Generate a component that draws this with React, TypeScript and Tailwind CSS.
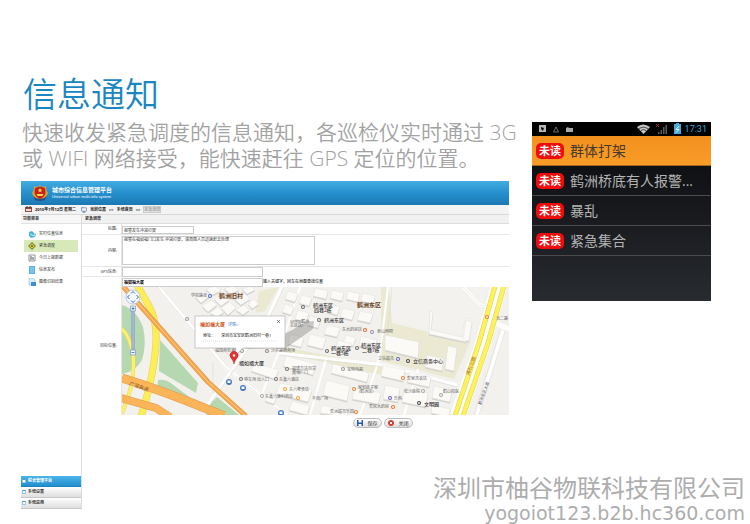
import { Monitor } from 'lucide-react'
import type { ReactNode } from 'react'

type MapLabel = {
  text: string
  x: number
  y: number
  kind?: 'area' | 'place' | 'shop'
}

const labels: MapLabel[] = [
  { text: '鹤洲旧村', x: 97, y: 11, kind: 'area' },
  { text: '学校路南', x: 69, y: 10 },
  { text: '福如福大厦', x: 117, y: 78, kind: 'place' },
  { text: '福围商务酒店', x: 93, y: 65 },
  { text: '沙井路晒商场', x: 149, y: 65 },
  { text: 'GPRS(鹤洲', x: 168, y: 36 },
  { text: '东区店)', x: 168, y: 40 },
  { text: '福建万达百货', x: 170, y: 83 },
  { text: '黄海厂门', x: 170, y: 87 },
  { text: '停车场 出入口', x: 122, y: 94 },
  { text: '东鑫六酒店', x: 157, y: 94 },
  { text: '东六零食店', x: 167, y: 104 },
  { text: '东鑫六便利商店', x: 143, y: 111 },
  { text: '鹤洲东区', x: 191, y: 20, kind: 'place' },
  { text: '四巷2栋', x: 192, y: 25, kind: 'place' },
  { text: '鹤洲东区', x: 202, y: 35, kind: 'place' },
  { text: '鹤洲东区', x: 235, y: 20, kind: 'area' },
  { text: '东大药房店', x: 220, y: 44 },
  { text: '泰山网吧', x: 255, y: 46 },
  { text: '鹤洲东区', x: 209, y: 63, kind: 'place' },
  { text: '一巷5栋', x: 209, y: 68, kind: 'place' },
  { text: '鹤洲东区', x: 239, y: 60, kind: 'place' },
  { text: '二巷7栋', x: 240, y: 65, kind: 'place' },
  { text: '立信超市', x: 256, y: 73 },
  { text: '立信商务中心', x: 291, y: 76, kind: 'place' },
  { text: '宝明电器', x: 225, y: 84 },
  { text: '爱家洗衣店', x: 285, y: 93 },
  { text: '家和妹子家', x: 236, y: 102 },
  { text: '(鹤洲店)', x: 237, y: 106 },
  { text: '松沙医院', x: 282, y: 106 },
  { text: '鹤山校医', x: 321, y: 106 },
  { text: '乐购', x: 272, y: 113 },
  { text: '丰南广场', x: 190, y: 113 },
  { text: '文明园', x: 302, y: 119, kind: 'place' },
  { text: '爱民大药房', x: 247, y: 121 },
  { text: '爱洲超市乐园', x: 208, y: 126 },
  { text: '北二路', x: 374, y: 33 },
]

const labelStyle = {
  area: 'fill-[#6b4423] text-[6px] font-bold',
  place: 'fill-[#333] text-[5px] font-medium',
  shop: 'fill-[#666] text-[4px]',
}

// [x, y, colour] of the small shop dots
const pins: [number, number, string][] = [
  [88, 9, '#5a6fc0'], [65, 32, '#9a9a9a'], [120, 64, '#9a9a9a'], [145, 64, '#8a8a8a'],
  [181, 20, '#6b6b6b'], [197, 33, '#6b6b6b'], [243, 43, '#e8642c'], [250, 45, '#8c8cc0'],
  [205, 64, '#6b6b6b'], [235, 61, '#6b6b6b'], [276, 72, '#6a62c8'], [286, 74, '#444'],
  [221, 82, '#9a9a9a'], [281, 91, '#e8843c'], [232, 102, '#e8843c'], [268, 111, '#6a62c8'],
  [271, 120, '#e8742c'], [234, 125, '#e8842c'], [163, 102, '#eea53c'], [176, 111, '#eea53c'],
  [140, 109, '#aaa'], [301, 104, '#aaa'], [319, 108, '#aaa'], [297, 116, '#444'],
  [365, 30, '#e8842c'], [165, 82, '#777'], [119, 92, '#777'], [154, 92, '#777'],
]

const buildings = [
  'M73 10l9-6 6 5-9 7z', 'M84 2l9-3 6 5-9 4z', 'M80 19l9-6 6 5-9 7z', 'M92 12l9-5 6 6-8 6z',
  'M88 26l8-6 6 5-7 5z', 'M99 21l9-6 6 6-8 7z', 'M112 12l10-6 6 6-9 6z', 'M114 23l8-5 5 5-6 5z',
  'M102 2l9-3 6 4-8 4z', 'M120 2l9-3 4 4-8 4z', 'M126 17l6-5 5 5-7 5z',
  'M166 4l10 3-3 8-10-3z', 'M180 8l10 3-3 8-10-3z', 'M194 1l12 3-2 8-13-3z', 'M210 3l12 3-2 8-12-3z',
  'M226 4l12 3-2 8-12-3z', 'M241 6l12 3-2 8-12-3z', 'M163 17l9 3-3 8-9-3z', 'M176 23l11 3-3 9-11-3z',
  'M208 17l10 3-3 8-10-3z', 'M221 21l12 3-3 9-12-3z', 'M238 24l13 3-3 9-13-3z', 'M188 29l11 3-3 9-11-3z',
  'M205 38l13 3-3 9-13-3z', 'M224 48l10 3-3 8-10-3z', 'M188 47l16 4-3 11-16-4z', 'M168 47l14 4-3 9-13-3z',
  'M216 53l14 4-3 7-13-3z', 'M239 49l16 4-3 10-15-4z',
  'M263 48l34 7-1 16-33-8z', 'M308 24l3 1-2 18 31 7 3-19 4 1-3 23-37-8z', 'M344 33l6 2-3 19-6-1z',
  'M326 59l9 2-3 23-9-2z', 'M305 68l17 4-2 12-17-4z', 'M211 77l36 9-2 9-36-9z', 'M261 78l22 5-2 11-22-5z',
  'M287 85l22 5-2 10-22-5z', 'M312 99l18 4-2 12-18-4z', 'M204 93l24 6-3 15-24-6z', 'M233 101l26 5-3 11-26-5z',
  'M263 98l15 3-2 14-15-3z', 'M282 101l24 5-2 14-24-5z', 'M200 118l26 6-1 6-27-4z', 'M310 118l18 4-1 8-18-4z',
  'M133 76l24 7-4 9-24-8z', 'M164 69l30 8-3 11-30-9z', 'M158 96l32 7-4 12-32-8z', 'M146 105l9 3-3 9-9-3z',
  'M170 114l18 5-3 9-18-5z',
]

function DistrictMap() {
  return (
    <svg
      viewBox="0 0 387 128"
      preserveAspectRatio="xMidYMid slice"
      className="block w-full bg-[#f3f1ed]"
      role="img"
      aria-label="地图"
    >
      <g fill="#b5d8b0">
        <path d="M0 18q14 4 21 22 4 18-1 33-7 12-20 14z" />
        <path d="M38 53l38 43-2 10-37-22z" />
        <path d="M36 93q8-1 14 4l24 18-16-2-23-10z" />
        <path d="M95 110l22 18H84l5-12z" />
      </g>
      <g fill="#ebe9d2">
        <path d="M259 0h8l3 36 78 19-16 37-72-18-1-20z" />
        <path d="M137 4l20-4-14 24-10 2z" />
        <path d="M163 60l100 20-4 8-99-22z" />
      </g>
      <path d="M268 0h97l-12 50-82-16z" fill="#f3f2ee" />
      <g fill="none" stroke="#fff">
        <path d="M37 0l36 43 30 36 62 49" strokeWidth="4" />
        <path d="M160 0l-16 34-34 49-28 40" strokeWidth="3" />
        <path d="M157 66l104 12 74 20" strokeWidth="3" />
        <path d="M178 0l-20 62-20 50" strokeWidth="2" />
        <path d="M266 0l-6 50-4 26-18 52" strokeWidth="2" />
        <path d="M204 72l-16 56M296 82l-14 46" strokeWidth="2" />
        <path d="M341 0l17 18 12 2" strokeWidth="3" />
        <path d="M366 33l21 9" strokeWidth="5" />
        <path d="M381 44l-26 84" strokeWidth="4" />
      </g>
      <g fill="none" stroke="#d6d5d2" strokeWidth="0.5">
        <path d="M35 0l36 43 30 36 62 49M39 0l36 43 30 36 62 49" />
        <path d="M162 0l-16 34-34 49-28 40M341 0l17 18 12 2M383 44l-26 84M378 44l-26 84" />
        <path d="M270 0l-5 49M91 75l0 32M157 68l104 12 74 20" />
      </g>
      <g fill="#d3d2cf" transform="translate(0 1.5)">
        {buildings.map((d) => (
          <path key={d} d={d} />
        ))}
      </g>
      <g fill="#fbfaf7" stroke="#dedcd8" strokeWidth="0.4">
        {buildings.map((d) => (
          <path key={d} d={d} />
        ))}
      </g>

      <g fill="none" strokeLinejoin="round">
        <path d="M-1 41q9 8 12 26 3 30-12 61" stroke="#e9d85c" strokeWidth="4" />
        <path d="M-1 41q9 8 12 26 3 30-12 61" stroke="#fdf06a" strokeWidth="3" />
        <path d="M15-2l12 21q8 14 7 35-1 30-15 76" stroke="#e6d04e" strokeWidth="7" />
        <path d="M15-2l12 21q8 14 7 35-1 30-15 76" stroke="#fdee58" strokeWidth="6" />
        <path d="M0 91q40 12 102 38" stroke="#dd9a50" strokeWidth="9" />
        <path d="M0 91q40 12 102 38" stroke="#fbb458" strokeWidth="8" />
        <path d="M-1 111l35 10 14 9" stroke="#dd9a50" strokeWidth="8" />
        <path d="M-1 111l35 10 14 9" stroke="#fbb458" strokeWidth="7" />
        <path d="M-1-3l87 98 38 34" stroke="#dc944a" strokeWidth="5" />
        <path d="M-1-3l87 98 38 34" stroke="#f8a94e" strokeWidth="4" />
        <path d="M-1-3l87 98 38 34" stroke="#fdc98a" strokeWidth="1" />
        <path d="M377-1l-16 57-25 73" stroke="#fff" strokeWidth="16" />
        <path d="M373-1l-16 57-24 73M382-1l-16 57-25 73" stroke="#ddd05a" strokeWidth="5" />
        <path d="M373-1l-16 57-24 73M382-1l-16 57-25 73" stroke="#fdf25c" strokeWidth="4" />
      </g>

      {pins.map(([x, y, fill]) => (
        <g key={`${x}-${y}`}>
          <circle cx={x} cy={y} r="2" fill={fill} />
          <circle cx={x} cy={y} r="0.9" fill="#fff" />
        </g>
      ))}
      {[[107, 95], [121, 101], [159, 126]].map(([x, y]) => (
        <g key={x}>
          <circle cx={x} cy={y} r="3" fill="#3f78c0" />
          <path d={`M${x - 1.5} ${y - 1.5}h3v2.5h-3z`} fill="#fff" />
        </g>
      ))}
      {labels.map((label) => (
        <text
          key={`${label.x}-${label.y}`}
          x={label.x}
          y={label.y}
          className={labelStyle[label.kind ?? 'shop']}
        >
          {label.text}
        </text>
      ))}
      <text transform="translate(7 98) rotate(19)" className="fill-[#8a5a20] text-[5px]">
        广深高速
      </text>
      <text transform="translate(347 89) rotate(-70)" className="fill-[#a8741c] text-[5px]">
        洲石公路
      </text>
      <text transform="translate(359 118) rotate(-70)" className="fill-[#444] text-[4px]">
        鹤洲东区大道
      </text>

      {/* pan and zoom control */}
      <path d="M11 20v46" stroke="#7d92c6" strokeWidth="3" />
      <path d="M11 23v40" stroke="#c9d6f2" strokeWidth="1" />
      <circle cx="11" cy="10" r="7" fill="#f4f8fe" stroke="#a9bede" strokeWidth="0.8" />
      <path
        d="M9 6.500l2-2 2 2M9 13.500l2 2 2-2M7.500 8l-2 2 2 2M14.500 8l2 2-2 2"
        fill="none"
        stroke="#3a6fc0"
        strokeWidth="1"
      />
      <g fill="#eef3fc" stroke="#7d92c6" strokeWidth="0.7">
        <path d="M8.500 19h5v5h-5zM8.500 63h5v5h-5z" />
      </g>
      <path d="M9.500 21.500h3M11 20v3M9.500 65.500h3" stroke="#4166b0" strokeWidth="0.8" />

      {/* info window */}
      <path d="M122 62l42-1 27-19 1-8q-10 0-20 8l-8 4z" fill="#555" opacity="0.3" />
      <path d="M73 29h90v32h-42l-9 9 2-9H73z" fill="#fff" stroke="#aaa" strokeWidth="0.6" />
      <text x="78" y="39" className="fill-[#cc5522] text-[5px] font-bold">
        福如福大厦
      </text>
      <text x="106" y="39" className="fill-[#3a7ac8] text-[4px]">
        详情»
      </text>
      <path d="M155 33l3 3M158 33l-3 3" stroke="#666" strokeWidth="0.8" />
      <text x="81" y="50" className="fill-[#111] text-[4px]">
        地址：
      </text>
      <text x="99" y="50" className="fill-[#111] text-[4px]">
        深圳市宝安区鹤洲旧村一巷1
      </text>
      <path d="M79 54h75" stroke="#bbb" strokeWidth="0.5" strokeDasharray="1 1" />
      <path d="M112 77q-1-4-3-6a4 4 0 1 1 6 0q-2 2-3 6z" fill="#e3312d" stroke="#a51b18" strokeWidth="0.4" />
      <circle cx="112" cy="68.500" r="1.200" fill="#fff" />
    </svg>
  )
}

function Emblem() {
  return (
    <svg viewBox="0 0 16 16" className="size-4 shrink-0" aria-hidden="true">
      <path d="M8 0l2 2 4-.5.500 4L16 8l-2 4-3 3-3 1-3-1-3-3-2-4 1.500-2.500.5-4L6 2z" fill="#d9a52a" />
      <path d="M3 3l5-1.500L13 3l.5 5q-1 4-5.500 6-4.500-2-5.500-6z" fill="#c5221f" />
      <path d="M8 3l.7 1.500 1.600.2-1.200 1 .3 1.600L8 6.500l-1.400.8.3-1.600-1.200-1 1.600-.2z" fill="#ffd84a" />
      <path d="M4.500 9h7l-1 2h-5z" fill="#ffd84a" />
      <path d="M1 11q3 3 7 3t7-3l-2 4q-2 1-5 1t-5-1z" fill="#24518e" />
    </svg>
  )
}

const menu: { text: string; icon: ReactNode }[] = [
  {
    text: '实时位置信息',
    icon: (
      <>
        <path d="M1 2l3-1 2 2 2 1-1 3-4 1-2-2z" fill="#4cb4d8" />
        <path d="M2 4l4 2 1-3" fill="none" stroke="#d8f2fa" strokeWidth="0.8" />
      </>
    ),
  },
  {
    text: '紧急调度',
    icon: (
      <>
        <path d="M4 0l4 4-4 4-4-4z" fill="#7c8427" />
        <path d="M4 1.500L6.500 4 4 6.500 1.500 4z" fill="#f0d34e" />
        <circle cx="4" cy="4" r="1" fill="#5c5f20" />
      </>
    ),
  },
  {
    text: '今日上报数据',
    icon: (
      <>
        <path d="M1 1h6v6H1z" fill="#fff" stroke="#777" strokeWidth="0.8" />
        <path d="M3 2v4M5 3v3" stroke="#444" strokeWidth="0.9" />
      </>
    ),
  },
  {
    text: '信息发布',
    icon: (
      <>
        <path d="M1 0h6v8H1z" fill="#57b5e4" />
        <path d="M2 2h4M2 4h4M2 6h4" stroke="#c6e8f8" strokeWidth="0.6" />
      </>
    ),
  },
  {
    text: '图像识别结果',
    icon: (
      <>
        <path d="M1 0h4l2 2v5H1z" fill="#dcecf8" stroke="#8db4d4" strokeWidth="0.6" />
        <path d="M3 4h5v4H3z" fill="#3f8fd0" />
      </>
    ),
  },
]

function AdminPanel() {
  return (
    <section className="mr-[9px] flex flex-col bg-white text-[4px] leading-[6px] text-[#333]">
      <header className="flex h-6 items-center gap-1 bg-linear-to-b from-[#42ace2] via-[#2590ce] to-[#1b78b4] pl-[11px] text-white">
        <Emblem />
        <div>
          <h2 className="text-[6px] leading-[7px] font-bold">城市综合信息管理平台</h2>
          <p className="font-['Liberation_Sans'] leading-[5px]">
            Universal urban multi-info system
          </p>
        </div>
      </header>

      <nav className="flex h-2.5 items-center gap-[3px] border-b border-[#d8d8d8] bg-[#f3f3f3] pl-1 font-bold text-[#222]">
        <svg viewBox="0 0 7 7" className="size-[7px]" aria-hidden="true">
          <path d="M0 1h7v5H0z" fill="#8a4b40" />
          <path d="M1 3h5v2H1z" fill="#f3d9d0" />
          <path d="M2 0v2M5 0v2" stroke="#333" />
        </svg>
        <span>2010年7月12日 星期二</span>
        <Monitor className="ml-0.5 size-1.5 text-[#28569a]" />
        <span>当前位置</span>
        <span>&gt;&gt;</span>
        <span>系统首页</span>
        <span>&gt;&gt;</span>
        <a href="#dispatch" className="border border-[#ccc] bg-[#e4e4e4] leading-[5px] text-[#aaa]">
          紧急调度
        </a>
      </nav>

      <div className="flex min-h-[294px]">
        <aside className="flex w-[61px] shrink-0 flex-col border-r border-[#ddd]">
          <h3 className="h-[9px] border-b border-[#e2e2e2] bg-[#f7f7f7] pl-0.5 leading-2 font-bold">功能菜单</h3>
          <ul className="mx-[3px] mt-1 flex-1">
            {menu.map((item) => (
              <li key={item.text}>
                <a
                  href="#menu"
                  className={`flex h-3 items-center gap-[3px] pl-1 ${item.text === '紧急调度' ? 'bg-[#d7e9b9]' : ''}`}
                >
                  <svg viewBox="0 0 8 8" className="size-2" aria-hidden="true">
                    {item.icon}
                  </svg>
                  {item.text}
                </a>
              </li>
            ))}
          </ul>
          {['综合管理平台', '系统设置', '系统应用'].map((text, i) => (
            <button
              key={text}
              type="button"
              className={`flex h-[11px] items-center gap-0.5 border-b pl-px text-left font-bold ${
                i === 0
                  ? 'border-[#1b83bd] bg-linear-to-b from-[#49b5e8] to-[#218fcd] text-white'
                  : 'border-[#c8c8c8] bg-linear-to-b from-white to-[#dedede]'
              }`}
            >
              <span className="h-1 w-1 border border-t-[#3d9bd8] border-[#9ec6e0] bg-white" />
              {text}
            </button>
          ))}
        </aside>

        <form id="dispatch" className="min-w-0 flex-1" onSubmit={(e) => e.preventDefault()}>
          <h3 className="h-[9px] border-b border-[#ddd] bg-[#f1f1f1] pl-[3px] leading-2 font-bold">紧急调度</h3>
          <div className="grid grid-cols-[40px_1fr] [&>label]:border-r [&>label]:border-[#e6e6e6] [&>label]:pr-1 [&>label]:text-right">
            <label htmlFor="title" className="border-b pt-0.5">标题:</label>
            <div className="border-b border-[#e6e6e6] pt-0.5">
              <input
                id="title"
                defaultValue="报警发生冲突打架"
                className="block h-2 w-[72px] border border-[#ccc] bg-white px-px"
              />
            </div>
            <label htmlFor="content" className="flex items-center justify-end border-b">内容:</label>
            <div className="border-b border-[#e6e6e6] py-px">
              <textarea
                id="content"
                defaultValue="报警在福如福门口发生 冲突打架，请周围人员迅速赶去处理"
                className="block h-[29px] w-[193px] resize-none overflow-hidden border border-[#ccc] bg-white px-px"
              />
            </div>
            <label htmlFor="gps" className="border-b pt-0.5">GPS信息:</label>
            <input id="gps" className="h-2.5 w-[141px] border border-[#ccc] bg-white px-px" />
            <label htmlFor="target" className="flex items-center justify-end">目标位置:</label>
            <div>
              <div className="flex h-2.5 items-center">
                <input
                  id="target"
                  defaultValue="福如福大厦"
                  className="h-[9px] w-[141px] border border-[#ccc] bg-white px-px font-bold text-black"
                />
                <span className="text-black">输入关键字，回车在地图查找位置</span>
              </div>
              <DistrictMap />
            </div>
          </div>
          <div className="mt-[3px] flex justify-center gap-0.5 pl-[175px] text-[5px]">
            <button
              type="button"
              className="flex h-2.5 w-[29px] items-center justify-center gap-1 rounded-full border border-[#bbb] bg-linear-to-b from-white to-[#ddd]"
            >
              <svg viewBox="0 0 6 6" className="size-1.5" aria-hidden="true">
                <path d="M0 0h6v6H0z" fill="#2857b0" />
                <path d="M1.500 0h3v2.500h-3zM1.500 4h3v2h-3z" fill="#fff" />
              </svg>
              <span>保存</span>
            </button>
            <button
              type="button"
              className="flex h-2.5 w-[29px] items-center justify-center gap-1 rounded-full border border-[#bbb] bg-linear-to-b from-white to-[#ddd]"
            >
              <svg viewBox="0 0 6 6" className="size-1.5" aria-hidden="true">
                <circle cx="3" cy="3" r="3" fill="#d03a2c" />
                <path d="M1.800 1.800l2.400 2.400M4.200 1.800L1.800 4.200" stroke="#fff" />
              </svg>
              <span>关闭</span>
            </button>
          </div>
        </form>
      </div>
    </section>
  )
}

function StatusBar() {
  return (
    <div className="flex h-3.5 items-center bg-black pr-1 pl-[7px]">
      <svg viewBox="0 0 36 8" className="h-2 w-9" aria-hidden="true">
        <path d="M0 0h7v7H0z" fill="#b8b8b8" />
        <path d="M2 2l3 1-1 3-2-2z" fill="#111" />
        <path d="M17 2l2.500 5h-5z" fill="none" stroke="#777" strokeWidth="0.9" />
        <path d="M27 3l2-1 1 1h4v4h-7z" fill="#a8a8a8" />
      </svg>
      <svg viewBox="0 0 48 12" className="ml-auto h-3 w-12" aria-hidden="true">
        <path d="M0 4q6-5 13 0L6.500 11z" fill="#c9c9c9" />
        <path d="M2 5.500q4-3 9 0M4 7.500q2-2 5 0" fill="none" stroke="#333" strokeWidth="0.9" />
        <path d="M21 11V9h1.500v2zM23.500 11V7H25v4zM26 11V4h1.500v7zM28.500 11V2H30v9z" fill="#5c5c5c" />
        <path d="M19 1l3 3M22 1l-3 3" stroke="#b02a22" strokeWidth="1" />
        <path d="M37 1h2V0h3v1h2v10h-7z" fill="#4aa9dc" />
        <path d="M42 3l-3 3.500h3L39 9.500" fill="none" stroke="#e8f7ff" strokeWidth="1" />
      </svg>
      <time className="font-[Roboto] text-[9px] leading-3 text-[#35a5d8]">17:31</time>
    </div>
  )
}

function Phone() {
  const messages = ['群体打架', '鹤洲桥底有人报警...', '暴乱', '紧急集合']

  return (
    <section className="mt-[47px] min-h-[179px] w-[179px] shrink-0 bg-linear-to-b from-[#08090c] to-[#282b30]">
      <StatusBar />
      <ul>
        {messages.map((text, i) => (
          <li
            key={text}
            className={`flex h-[30px] items-center gap-1.5 border-b pl-1 text-[14px] ${
              i === 0
                ? 'border-[#a8641a] bg-linear-to-b from-[#f3911d] to-[#fa9c28] text-[#463a2c]'
                : 'border-[#4a4b4d] text-[#b4b4b4]'
            }`}
          >
            <span className="rounded-[5px] bg-[#f00c0c] px-[3px] text-[11px] leading-4 font-bold text-white">
              未读
            </span>
            {text}
          </li>
        ))}
      </ul>
    </section>
  )
}

export default function App() {
  return (
    <main className="relative min-h-screen bg-white pt-[75px] pr-[39px] pb-[15px] pl-[21px] font-['Open_Sans','Noto_Sans_CJK_SC',sans-serif]">
      <div className="flex items-start gap-[14px]">
        <div className="min-w-0 flex-1">
          <h1 className="pl-0.5 text-[34px] leading-[38px] font-[350] text-[#1b87c0]">信息通知</h1>
          <p className="mt-1.5 mb-2.5 pl-px text-[21px] leading-[26px] font-[350] whitespace-nowrap text-[#a2a2a2]">
            快速收发紧急调度的信息通知，各巡检仪实时通过 3G
            <br />
            或 WIFI 网络接受，能快速赶往 GPS 定位的位置。
          </p>
          <AdminPanel />
        </div>
        <Phone />
      </div>
      <footer className="absolute right-[5px] bottom-0 text-right text-[#adadad]">
        <p className="text-[24px] leading-7">深圳市柚谷物联科技有限公司</p>
        <p className="font-['DejaVu_Sans'] text-[19px] leading-[22px]">yogoiot123.b2b.hc360.com</p>
      </footer>
    </main>
  )
}
